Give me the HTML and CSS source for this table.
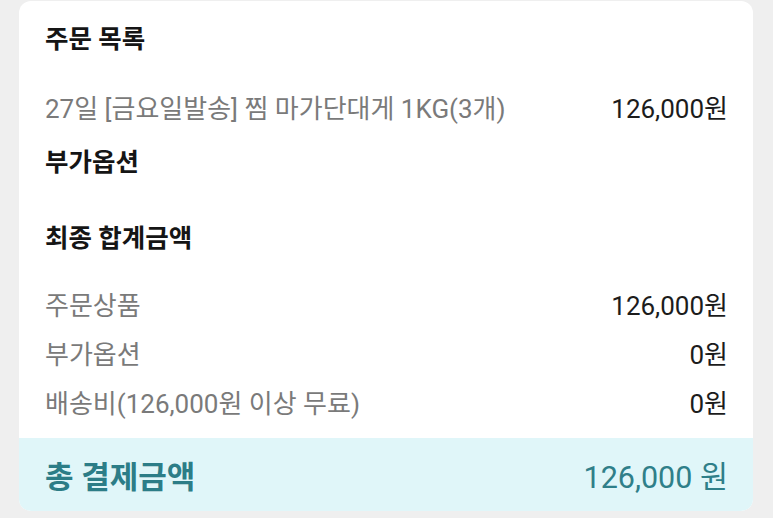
FILE: index.html
```html
<!DOCTYPE html>
<html lang="ko">
<head>
<meta charset="utf-8">
<link rel="stylesheet" href="styles.css">
</head>
<body>
<div class="card">
  <div class="content">
    <h2 class="title first">주문 목록</h2>
    <div class="row item">
      <span class="label">27일 [금요일발송] 찜 마가단대게 1KG(3개)</span>
      <span class="value">126,000원</span>
    </div>
    <h2 class="title option">부가옵션</h2>
    <h2 class="title total">최종 합계금액</h2>
    <div class="summary">
      <div class="row">
        <span class="label">주문상품</span>
        <span class="value">126,000원</span>
      </div>
      <div class="row">
        <span class="label">부가옵션</span>
        <span class="value">0원</span>
      </div>
      <div class="row">
        <span class="label">배송비(126,000원 이상 무료)</span>
        <span class="value">0원</span>
      </div>
    </div>
  </div>
  <div class="footer">
    <span class="footer-label">총 결제금액</span>
    <span class="footer-value">126,000 원</span>
  </div>
</div>
</body>
</html>
```
FILE: styles.css
```css
html, body {
  margin: 0;
  padding: 0;
  background: #efefef;
}
body {
  padding: 1px 20px 0 19px;
  font-family: "Roboto", "Noto Sans CJK KR", sans-serif;
}
.card {
  background: #ffffff;
  border-radius: 12px;
  overflow: hidden;
}
.content {
  padding: 19px 25px 12px 26px;
}
.title {
  margin: 0;
  font-size: 25.5px;
  font-weight: 700;
  line-height: 38px;
  color: #151515;
}
.title.option {
  margin-top: 12px;
}
.title.total {
  margin-top: 38px;
}
.row {
  display: flex;
  justify-content: space-between;
  align-items: center;
  height: 49px;
  font-size: 26px;
}
.row.item {
  margin-top: 24px;
}
.summary {
  margin-top: 22px;
}
.label {
  color: #7a7a7a;
}
.value {
  color: #1c1c1c;
}
.footer {
  display: flex;
  justify-content: space-between;
  align-items: center;
  height: 73px;
  padding: 0 25px 0 26px;
  background: #e0f6f9;
}
.footer-label {
  font-size: 31px;
  font-weight: 700;
  color: #2c7d87;
}
.footer-value {
  font-size: 30.5px;
  color: #2f7f89;
}
```
